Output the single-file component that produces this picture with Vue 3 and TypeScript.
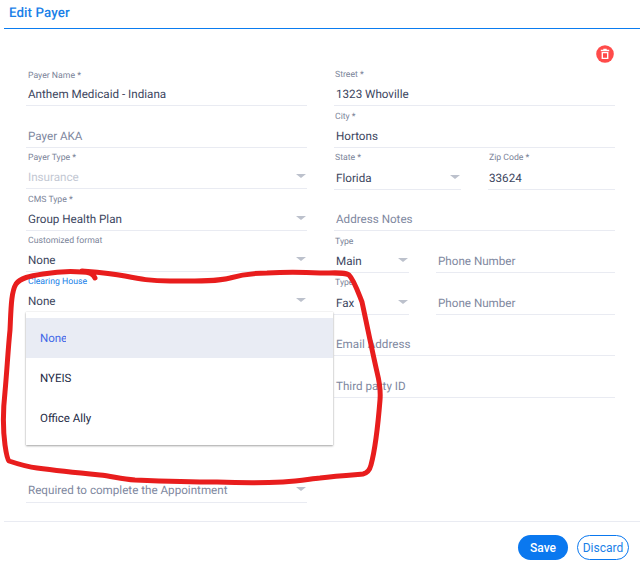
<script setup lang="ts">
interface Field {
  label?: string
  value?: string
  placeholder?: string
  select?: boolean
  muted?: boolean
  focused?: boolean
}
interface Row {
  parts: (Field & { cls?: string })[]
}

const leftTop: Field[] = [
  { label: 'Payer Name *', value: 'Anthem Medicaid - Indiana' },
  { placeholder: 'Payer AKA' },
  { label: 'Payer Type *', value: 'Insurance', select: true, muted: true },
  { label: 'CMS Type *', value: 'Group Health Plan', select: true },
  { label: 'Customized format', value: 'None', select: true },
  { label: 'Clearing House', value: 'None', select: true, focused: true },
]
const right: Row[] = [
  { parts: [{ label: 'Street *', value: '1323 Whoville' }] },
  { parts: [{ label: 'City *', value: 'Hortons' }] },
  {
    parts: [
      { label: 'State *', value: 'Florida', select: true, cls: 'state' },
      { label: 'Zip Code *', value: '33624', cls: 'zip' },
    ],
  },
  { parts: [{ placeholder: 'Address Notes' }] },
  {
    parts: [
      { label: 'Type', value: 'Main', select: true, cls: 'type' },
      { placeholder: 'Phone Number', cls: 'phone' },
    ],
  },
  {
    parts: [
      { label: 'Type', value: 'Fax', select: true, cls: 'type' },
      { placeholder: 'Phone Number', cls: 'phone' },
    ],
  },
  { parts: [{ placeholder: 'Email Address' }] },
  { parts: [{ placeholder: 'Third party ID' }] },
]
const options = ['None', 'NYEIS', 'Office Ally']
const scribble =
  'M95 278 C93 273 88 272 82 272 C72 271 60 271 43 274 C30 276 20 278 16 284 C11 292 11 310 10 330 C8 350 7 370 5 392 C3 410 3 430 5 445 C6 452 7 459 9 461 C18 464 28 467 37 468 C60 471 80 473 100 475 C112 476 120 479 135 480 C160 481 190 482 217 482 C240 483 265 483 283 482 C300 481 310 479 320 478 C335 476 350 475 363 474 C368 473 370 469 371 465 C375 450 378 425 380 400 C381 388 379 380 377 372 C372 350 368 330 362 302 C358 292 354 280 349 275 C345 272 335 273 320 273 C300 272 285 272 267 273 C250 273 240 275 230 278 C215 282 195 281 170 281 C150 281 140 279 125 276 C110 273 95 272 82 271'
</script>

<template>
  <div class="page">
    <header class="head">Edit Payer</header>
    <main class="body">
      <div class="actions">
        <button class="trash" aria-label="Delete">
          <svg width="18" height="18" viewBox="0 0 18 18">
            <circle cx="9" cy="9" r="8.8" fill="#ff4b4a" />
            <path d="M4.800 4.800h8.400v1.500H4.800zM7.300 3.800h3.400v1H7.300z" fill="#fff" />
            <path fill-rule="evenodd" d="M5.600 7h6.800v7H5.600zM7 8.300v4.400h4V8.300z" fill="#fff" />
          </svg>
        </button>
      </div>
      <div class="columns">
        <div class="col left">
          <div
            v-for="f in leftTop"
            :key="f.label ?? f.placeholder"
            class="field"
          >
            <label v-if="f.label" class="label" :class="{ focus: f.focused }">{{ f.label }}</label>
            <div class="control">
              <span :class="f.value ? (f.muted ? 'muted' : 'value') : 'ph'">{{ f.value ?? f.placeholder }}</span>
              <i v-if="f.select" class="caret"></i>
            </div>
          </div>
          <div class="gap"></div>
          <div class="field">
            <div class="control last">
              <span class="ph">Required to complete the Appointment</span>
              <i class="caret"></i>
            </div>
          </div>
        </div>
        <div class="col right">
          <div v-for="(r, i) in right" :key="i" class="row">
            <div
              v-for="f in r.parts"
              :key="f.label ?? f.placeholder"
              class="field"
              :class="f.cls"
            >
              <label v-if="f.label" class="label">{{ f.label }}</label>
              <div class="control">
                <span :class="f.value ? 'value' : 'ph'">{{ f.value ?? f.placeholder }}</span>
                <i v-if="f.select" class="caret"></i>
              </div>
            </div>
          </div>
        </div>
      </div>
    </main>
    <footer class="foot">
      <button class="btn save">Save</button>
      <button class="btn discard">Discard</button>
    </footer>

    <ul class="menu">
      <li v-for="(o, i) in options" :key="o" class="option" :class="{ active: i === 0 }">
        <span>{{ o }}</span>
      </li>
    </ul>
    <svg class="scribble" width="640" height="567" viewBox="0 0 640 567">
      <path :d="scribble" fill="none" stroke="#e81d1d" stroke-width="5" stroke-linecap="round" stroke-linejoin="round" />
    </svg>
  </div>
</template>

<style>
html, body { margin: 0; background: #fff; }
</style>

<style scoped>
.page {
  position: relative;
  width: 640px;
  height: 567px;
  overflow: hidden;
  font-family: Roboto, "Liberation Sans", sans-serif;
  text-rendering: geometricPrecision;
  background: #fff;
  color: #3c4660;
}
.head {
  height: 29px;
  margin-left: 4px;
  padding-left: 5px;
  box-sizing: border-box;
  border-bottom: 1px solid #0a7cf0;
  font-size: 13.300px;
  font-weight: 500;
  line-height: 27px;
  color: #1a7fe8;
  letter-spacing: 0.1px;
}
.body {
  height: 492px;
  box-sizing: border-box;
  padding: 18px 25px 0 26px;
  position: relative;
}
.actions {
  position: absolute;
  top: 16px;
  right: 26px;
}
.trash {
  display: block;
  width: 18px;
  height: 18px;
  padding: 0;
  border: 0;
  background: none;
}
.columns {
  display: flex;
  gap: 27px;
  padding-top: 18px;
}
.col {
  width: 281px;
  display: flex;
  flex-direction: column;
}
.left .field { height: 41.400px; flex: none; }
.left { height: 438px; }
.right { margin-top: -0.5px; }
.gap { flex: 1; }
.row {
  display: flex;
  height: 41.700px;
}
.row .field { flex: 1; min-width: 0; height: 100%; }
.row .state { flex: 0 0 127px; margin-right: 27px; }
.row .zip { flex: 0 0 127px; }
.row .type { flex: 0 0 75px; margin-right: 27px; }
.row .phone { flex: 0 0 179px; }
.field {
  position: relative;
  box-sizing: border-box;
  border-bottom: 1px solid #e9ebf2;
}
.label {
  position: absolute;
  top: 4.500px;
  left: 2px;
  font-size: 8.700px;
  line-height: 12px;
  color: #7b8499;
}
.right .label { left: 1px; }
.zip .control { left: 1px; }
.label.focus { color: #1a7fe8; }
.control {
  position: absolute;
  left: 2px;
  right: 0;
  bottom: 2px;
  height: 18px;
  line-height: 18px;
  font-size: 11.650px;
  white-space: nowrap;
}
.control.last { bottom: 3px; }
.value { color: #3c4660; }
.ph { color: #8088a0; }
.muted { color: #c3c8d3; }
.caret {
  position: absolute;
  right: 1px;
  top: 6px;
  width: 0;
  height: 0;
  border-left: 5px solid transparent;
  border-right: 5px solid transparent;
  border-top: 4px solid #bcc1cc;
}
.foot {
  display: flex;
  justify-content: flex-end;
  gap: 9px;
  margin-left: 4px;
  padding: 13px 11px 0 0;
  height: 46px;
  box-sizing: border-box;
  border-top: 1px solid #e9ebf2;
}
.btn {
  height: 25px;
  border-radius: 13px;
  font-family: inherit;
  font-size: 12px;
  padding: 0;
  box-sizing: border-box;
}
.save {
  width: 50px;
  background: #0a78ef;
  border: 0;
  color: #fff;
  font-weight: 500;
}
.discard {
  width: 52px;
  background: #fff;
  border: 1px solid #0a78ef;
  color: #1a7fe8;
}
.menu {
  position: absolute;
  left: 26px;
  top: 312px;
  width: 307px;
  height: 133px;
  margin: 0;
  padding: 6px 0 7px;
  box-sizing: border-box;
  list-style: none;
  background: #fff;
  box-shadow: 0 1px 2px rgba(0, 0, 0, 0.35), 0 0 1px rgba(0, 0, 0, 0.15);
}
.option {
  height: 40px;
  padding-left: 14px;
  line-height: 40px;
  font-size: 11.500px;
  color: #232a44;
}
.option.active {
  background: #e9ecf4;
  color: #3e68e8;
}
.option.active span {
  display: block;
  width: 26px;
  overflow: hidden;
}
.scribble {
  position: absolute;
  left: 0;
  top: 0;
  pointer-events: none;
}
</style>
